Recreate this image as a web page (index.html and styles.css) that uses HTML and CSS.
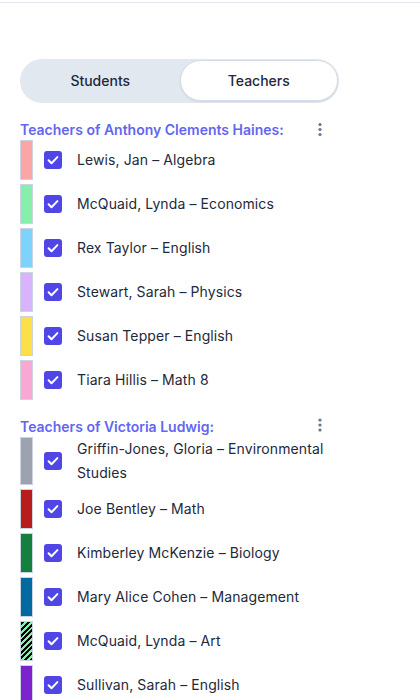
FILE: index.html
```html
<!DOCTYPE html>
<html lang="en">
<head>
<meta charset="utf-8">
<title>Teachers</title>
<link rel="stylesheet" href="styles.css">
</head>
<body>
<div class="topline"></div>
<main class="panel">
  <div class="toggle">
    <button class="tab">Students</button>
    <button class="tab active">Teachers</button>
  </div>

  <section class="group">
    <div class="group-head">
      <h2 class="group-title">Teachers of Anthony Clements Haines:</h2>
      <button class="kebab" aria-label="More"><svg width="20" height="20" viewBox="0 0 20 20"><circle cx="10" cy="4.5" r="1.6"/><circle cx="10" cy="9.5" r="1.6"/><circle cx="10" cy="14.5" r="1.6"/></svg></button>
    </div>
    <ul class="list">
      <li class="row"><span class="swatch c1"></span><span class="check"><svg viewBox="0 0 18 18"><path d="M4.6 9.3l2.9 2.9 5.9-6.1"/></svg></span><span class="label">Lewis, Jan – Algebra</span></li>
      <li class="row"><span class="swatch c2"></span><span class="check"><svg viewBox="0 0 18 18"><path d="M4.6 9.3l2.9 2.9 5.9-6.1"/></svg></span><span class="label">McQuaid, Lynda – Economics</span></li>
      <li class="row"><span class="swatch c3"></span><span class="check"><svg viewBox="0 0 18 18"><path d="M4.6 9.3l2.9 2.9 5.9-6.1"/></svg></span><span class="label">Rex Taylor – English</span></li>
      <li class="row"><span class="swatch c4"></span><span class="check"><svg viewBox="0 0 18 18"><path d="M4.6 9.3l2.9 2.9 5.9-6.1"/></svg></span><span class="label">Stewart, Sarah – Physics</span></li>
      <li class="row"><span class="swatch c5"></span><span class="check"><svg viewBox="0 0 18 18"><path d="M4.6 9.3l2.9 2.9 5.9-6.1"/></svg></span><span class="label">Susan Tepper – English</span></li>
      <li class="row"><span class="swatch c6"></span><span class="check"><svg viewBox="0 0 18 18"><path d="M4.6 9.3l2.9 2.9 5.9-6.1"/></svg></span><span class="label">Tiara Hillis – Math 8</span></li>
    </ul>
  </section>

  <section class="group">
    <div class="group-head">
      <h2 class="group-title">Teachers of Victoria Ludwig:</h2>
      <button class="kebab" aria-label="More"><svg width="20" height="20" viewBox="0 0 20 20"><circle cx="10" cy="3" r="1.6"/><circle cx="10" cy="8" r="1.6"/><circle cx="10" cy="13" r="1.6"/></svg></button>
    </div>
    <ul class="list">
      <li class="row"><span class="swatch c7"></span><span class="check"><svg viewBox="0 0 18 18"><path d="M4.6 9.3l2.9 2.9 5.9-6.1"/></svg></span><span class="label">Griffin-Jones, Gloria – Environmental Studies</span></li>
      <li class="row"><span class="swatch c8"></span><span class="check"><svg viewBox="0 0 18 18"><path d="M4.6 9.3l2.9 2.9 5.9-6.1"/></svg></span><span class="label">Joe Bentley – Math</span></li>
      <li class="row"><span class="swatch c9"></span><span class="check"><svg viewBox="0 0 18 18"><path d="M4.6 9.3l2.9 2.9 5.9-6.1"/></svg></span><span class="label">Kimberley McKenzie – Biology</span></li>
      <li class="row"><span class="swatch c10"></span><span class="check"><svg viewBox="0 0 18 18"><path d="M4.6 9.3l2.9 2.9 5.9-6.1"/></svg></span><span class="label">Mary Alice Cohen – Management</span></li>
      <li class="row"><span class="swatch c11"></span><span class="check"><svg viewBox="0 0 18 18"><path d="M4.6 9.3l2.9 2.9 5.9-6.1"/></svg></span><span class="label">McQuaid, Lynda – Art</span></li>
      <li class="row"><span class="swatch c12"></span><span class="check"><svg viewBox="0 0 18 18"><path d="M4.6 9.3l2.9 2.9 5.9-6.1"/></svg></span><span class="label">Sullivan, Sarah – English</span></li>
    </ul>
  </section>
</main>
</body>
</html>
```

FILE: styles.css
```css
* { box-sizing: border-box; }

html, body {
  margin: 0;
  padding: 0;
  background: #ffffff;
  font-family: Inter, "Noto Sans", "Liberation Sans", sans-serif;
  color: #1e293b;
}

body {
  height: 700px;
  overflow: hidden;
}

.topline {
  height: 3px;
  border-bottom: 1px solid #e2e8f0;
}

.panel {
  width: 340px;
  padding: 56px 0 0 20px;
}

.toggle {
  display: flex;
  width: 319px;
  height: 44px;
  padding: 1px 1px 2px 1px;
  background: #e2e8f0;
  border-radius: 999px;
}

.tab {
  flex: 1;
  border: 1px solid transparent;
  background: transparent;
  border-radius: 999px;
  font-family: inherit;
  font-size: 14px;
  font-weight: 500;
  color: #1e293b;
  padding: 0;
  cursor: pointer;
}

.tab.active {
  background: #ffffff;
  border-color: #d5dce6;
  box-shadow: 0 1px 2px rgba(15, 23, 42, 0.08);
}

.group {
  margin-top: 17px;
}

.group-head {
  display: flex;
  align-items: center;
  justify-content: space-between;
  height: 20px;
  padding-right: 10px;
}

.group-title {
  margin: 0;
  font-size: 14px;
  line-height: 20px;
  font-weight: 600;
  color: #6366f1;
}

.kebab {
  width: 20px;
  height: 20px;
  padding: 0;
  border: 0;
  background: transparent;
  display: flex;
}

.kebab svg {
  fill: #64748b;
}

.list {
  list-style: none;
  margin: 0;
  padding: 0;
  display: flex;
  flex-direction: column;
  gap: 4px;
}

.row {
  display: flex;
  align-items: stretch;
  min-height: 40px;
}

.swatch {
  flex: none;
  width: 13px;
  border: 1px solid #cbd5e1;
}

.check {
  flex: none;
  align-self: center;
  width: 18px;
  height: 18px;
  margin-left: 11px;
  border-radius: 3px;
  background: #4f46e5;
  display: flex;
}

.check svg {
  width: 18px;
  height: 18px;
  fill: none;
  stroke: #ffffff;
  stroke-width: 2;
  stroke-linecap: round;
  stroke-linejoin: round;
}

.label {
  align-self: center;
  margin-left: 15px;
  font-size: 14px;
  letter-spacing: 0.1px;
  line-height: 24px;
  color: #1e293b;
}

.c1 { background: #fca5a5; }
.c2 { background: #86efac; }
.c3 { background: #7dd3fc; }
.c4 { background: #d8b4fe; }
.c5 { background: #fde047; }
.c6 { background: #f9a8d4; }
.c7 { background: #9ca3af; }
.c8 { background: #b91c1c; }
.c9 { background: #15803d; }
.c10 { background: #0369a1; }
.c11 { background: repeating-linear-gradient(-45deg, #000000 0 2px, #86efac 2px 4px); }
.c12 { background: #7e22ce; }
```
